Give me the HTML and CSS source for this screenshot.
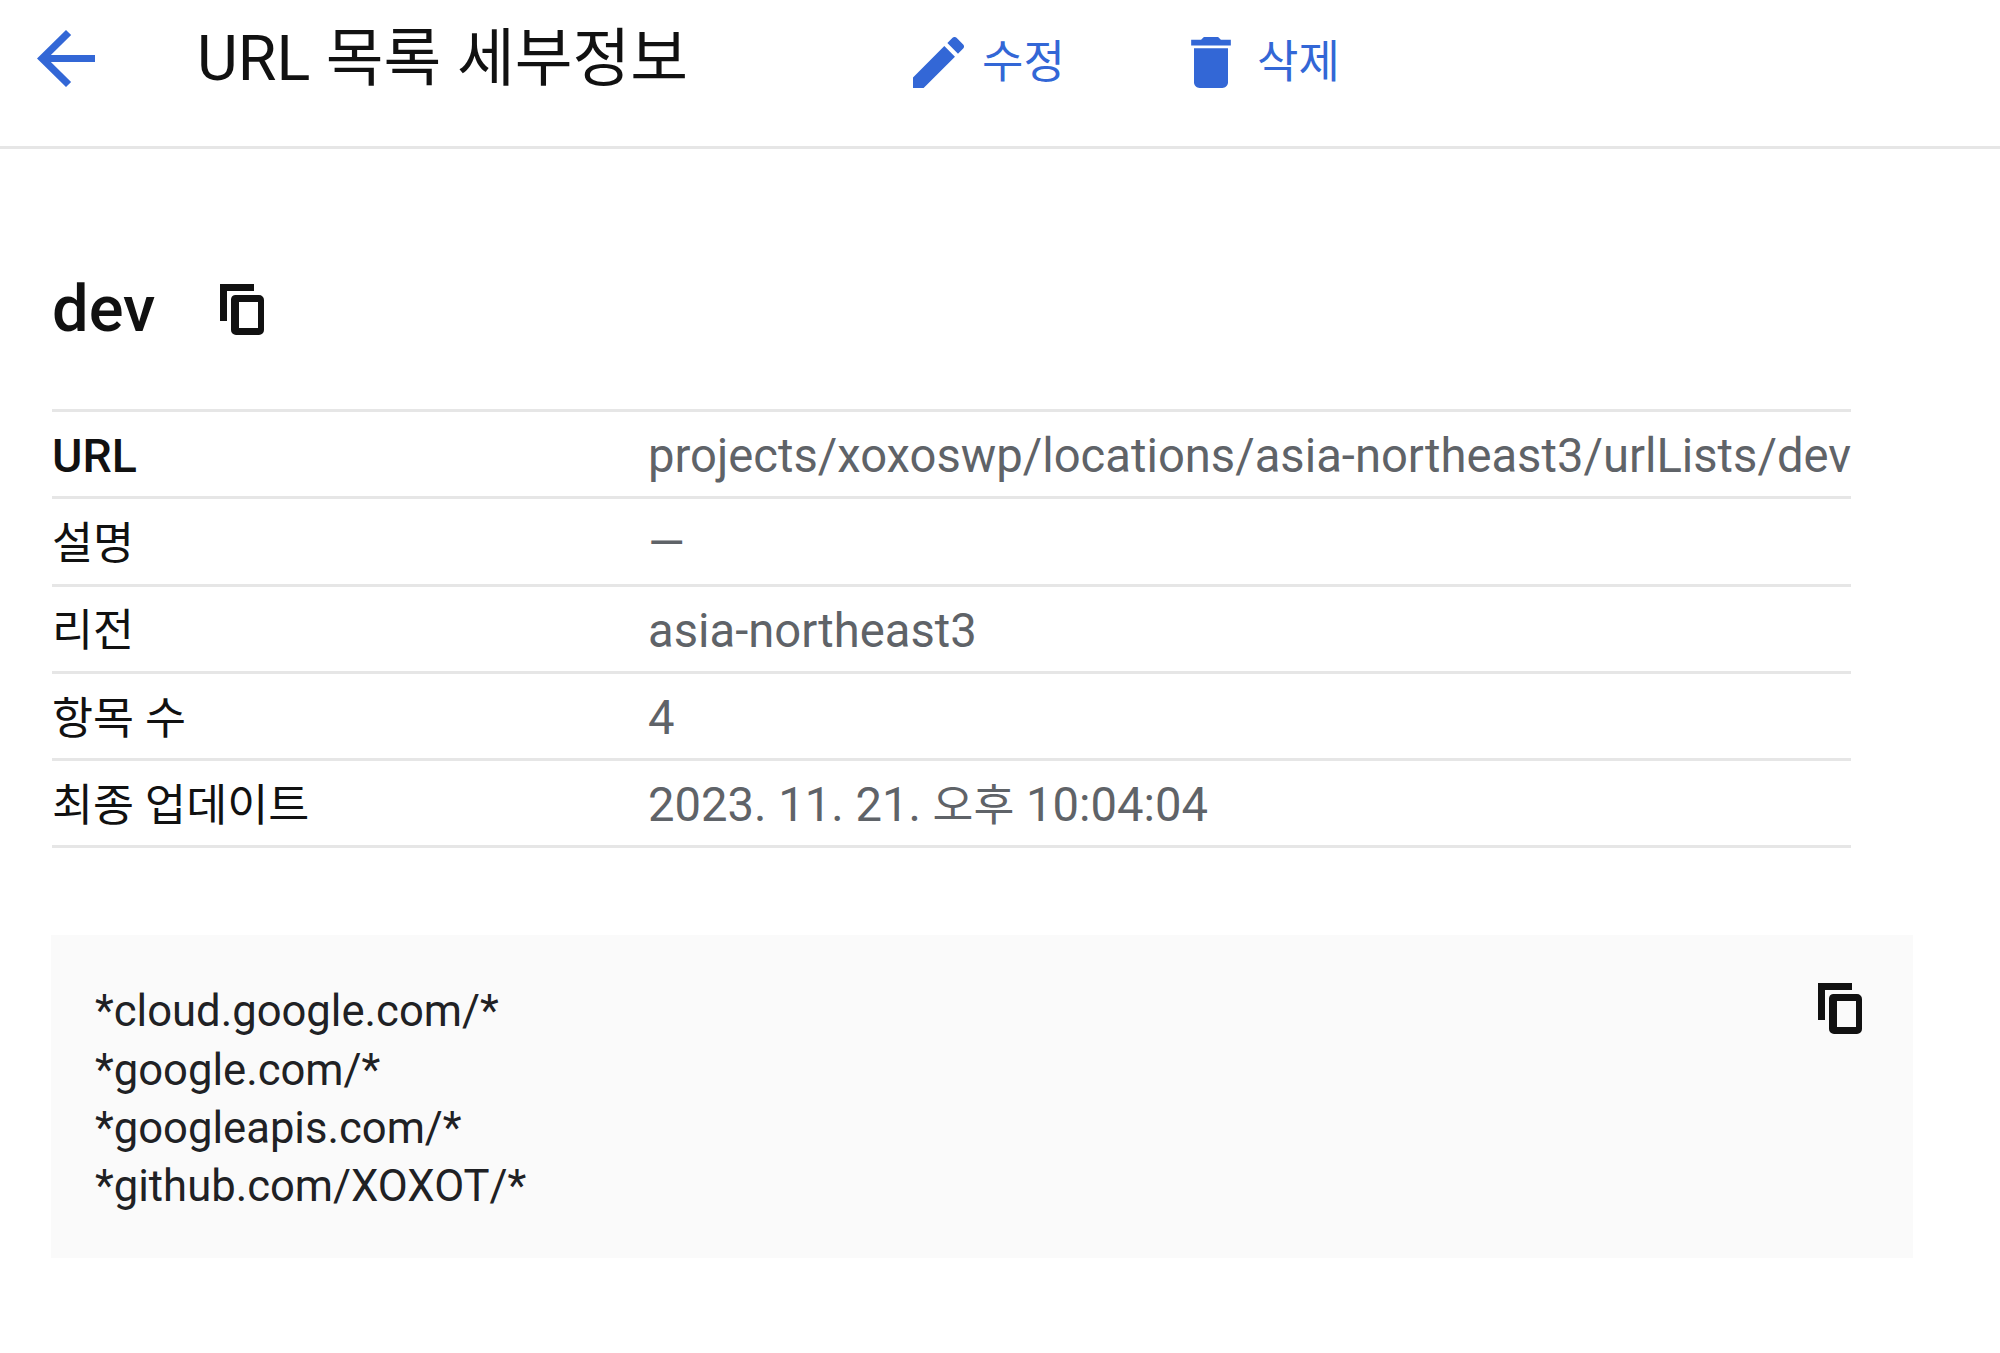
FILE: index.html
```html
<!DOCTYPE html>
<html lang="ko">
<head>
<meta charset="utf-8">
<title>URL 목록 세부정보</title>
<link rel="stylesheet" href="styles.css">
</head>
<body>
<header class="toolbar">
  <svg class="icon-back" viewBox="4 4 16 16" preserveAspectRatio="none"><path d="M20 11H7.83l5.59-5.59L12 4l-8 8 8 8 1.41-1.41L7.83 13H20v-2z"/></svg>
  <h1 class="page-title">URL 목록 세부정보</h1>
  <a class="action action-edit">
    <svg class="icon-edit" viewBox="3 3 18 18"><path d="M3 17.25V21h3.75L17.81 9.94l-3.75-3.75L3 17.25zM20.71 7.04c.39-.39.39-1.02 0-1.41l-2.34-2.34c-.39-.39-1.02-.39-1.41 0l-1.83 1.83 3.75 3.75 1.83-1.83z"/></svg>
    <span>수정</span>
  </a>
  <a class="action action-delete">
    <svg class="icon-trash" viewBox="5 3 14 18"><path d="M6 19c0 1.1.9 2 2 2h8c1.1 0 2-.9 2-2V7H6v12zM19 4h-3.5l-1-1h-5l-1 1H5v2h14V4z"/></svg>
    <span>삭제</span>
  </a>
</header>
<main class="content">
  <div class="name-row">
    <h2 class="name">dev</h2>
    <svg class="icon-copy" viewBox="0 0 45 51"><path d="M0 0h34v7H7v30H0zM15 11h24a5 5 0 0 1 5 5v30a5 5 0 0 1-5 5H16a5 5 0 0 1-5-5V16a5 5 0 0 1 4-5zM19 18v26h19V18z" fill-rule="evenodd"/></svg>
  </div>
  <dl class="details">
    <div class="row"><dt class="label label-latin">URL</dt><dd class="value">projects/xoxoswp/locations/asia-northeast3/urlLists/dev</dd></div>
    <div class="row"><dt class="label">설명</dt><dd class="value">—</dd></div>
    <div class="row"><dt class="label">리전</dt><dd class="value">asia-northeast3</dd></div>
    <div class="row"><dt class="label">항목 수</dt><dd class="value">4</dd></div>
    <div class="row"><dt class="label">최종 업데이트</dt><dd class="value">2023. 11. 21. <span class="value-ko">오후</span> 10:04:04</dd></div>
  </dl>
  <section class="code-box">
    <pre class="code">*cloud.google.com/*
*google.com/*
*googleapis.com/*
*github.com/XOXOT/*</pre>
    <svg class="icon-copy" viewBox="0 0 45 51"><path d="M0 0h34v7H7v30H0zM15 11h24a5 5 0 0 1 5 5v30a5 5 0 0 1-5 5H16a5 5 0 0 1-5-5V16a5 5 0 0 1 4-5zM19 18v26h19V18z" fill-rule="evenodd"/></svg>
  </section>
</main>
</body>
</html>
```
FILE: styles.css
```css
* { box-sizing: border-box; }
html, body { margin: 0; padding: 0; background: #fff; }
body {
  width: 2000px;
  height: 1353px;
  overflow: hidden;
  font-family: Roboto, "Noto Sans CJK KR", sans-serif;
  color: #202124;
}
.toolbar {
  display: flex;
  align-items: flex-start;
  height: 149px;
  padding: 30px 0 0 37px;
  border-bottom: 3px solid #e6e6e6;
}
.icon-back { width: 58px; height: 57px; fill: #3367d6; flex: none; }
.page-title {
  margin: -6px 0 0 102px;
  width: 716px;
  font-size: 62.8px;
  font-weight: 400;
  line-height: 70px;
  color: #111;
  white-space: nowrap;
}
.action {
  display: flex;
  align-items: center;
  margin-top: 7px;
  color: #3367d6;
  fill: #3367d6;
  font-size: 45px;
  line-height: 51px;
}
.action-edit { width: 276px; gap: 18px; }
.action-delete { gap: 24px; }
.icon-edit { width: 51px; height: 51px; }
.icon-trash { width: 44px; height: 51px; }
.content { padding: 135px 0 0 52px; }
.name-row { display: flex; align-items: center; height: 51px; gap: 65px; }
.name { margin: 0; font-size: 65px; font-weight: 500; line-height: 51px; color: #111; }
.icon-copy { width: 45px; height: 51px; fill: #111; flex: none; }
.details {
  margin: 74px 0 0;
  width: 1799px;
  border-top: 3px solid #e6e6e6;
}
.row {
  display: grid;
  grid-template-columns: 596px 1fr;
  align-items: center;
  height: 87.3px;
  border-bottom: 3px solid #e6e6e6;
}
.label { padding-top: 5px; font-size: 44.6px; line-height: 50px; color: #111; white-space: nowrap; }
.label-latin { padding-top: 4px; font-size: 46.5px; font-weight: 500; }
.value { margin: 0; padding-top: 4px; font-size: 47.2px; line-height: 50px; color: #5f6368; white-space: nowrap; }
.value-ko { font-size: 44.4px; }
.code-box {
  display: flex;
  justify-content: space-between;
  width: 1862px;
  height: 323px;
  margin: 87px 0 0 -1px;
  padding: 48px 50px 0 44px;
  background: #fafafa;
}
.code {
  margin: 0;
  font-family: inherit;
  font-size: 43.6px;
  line-height: 58.2px;
  color: #202124;
}
```
